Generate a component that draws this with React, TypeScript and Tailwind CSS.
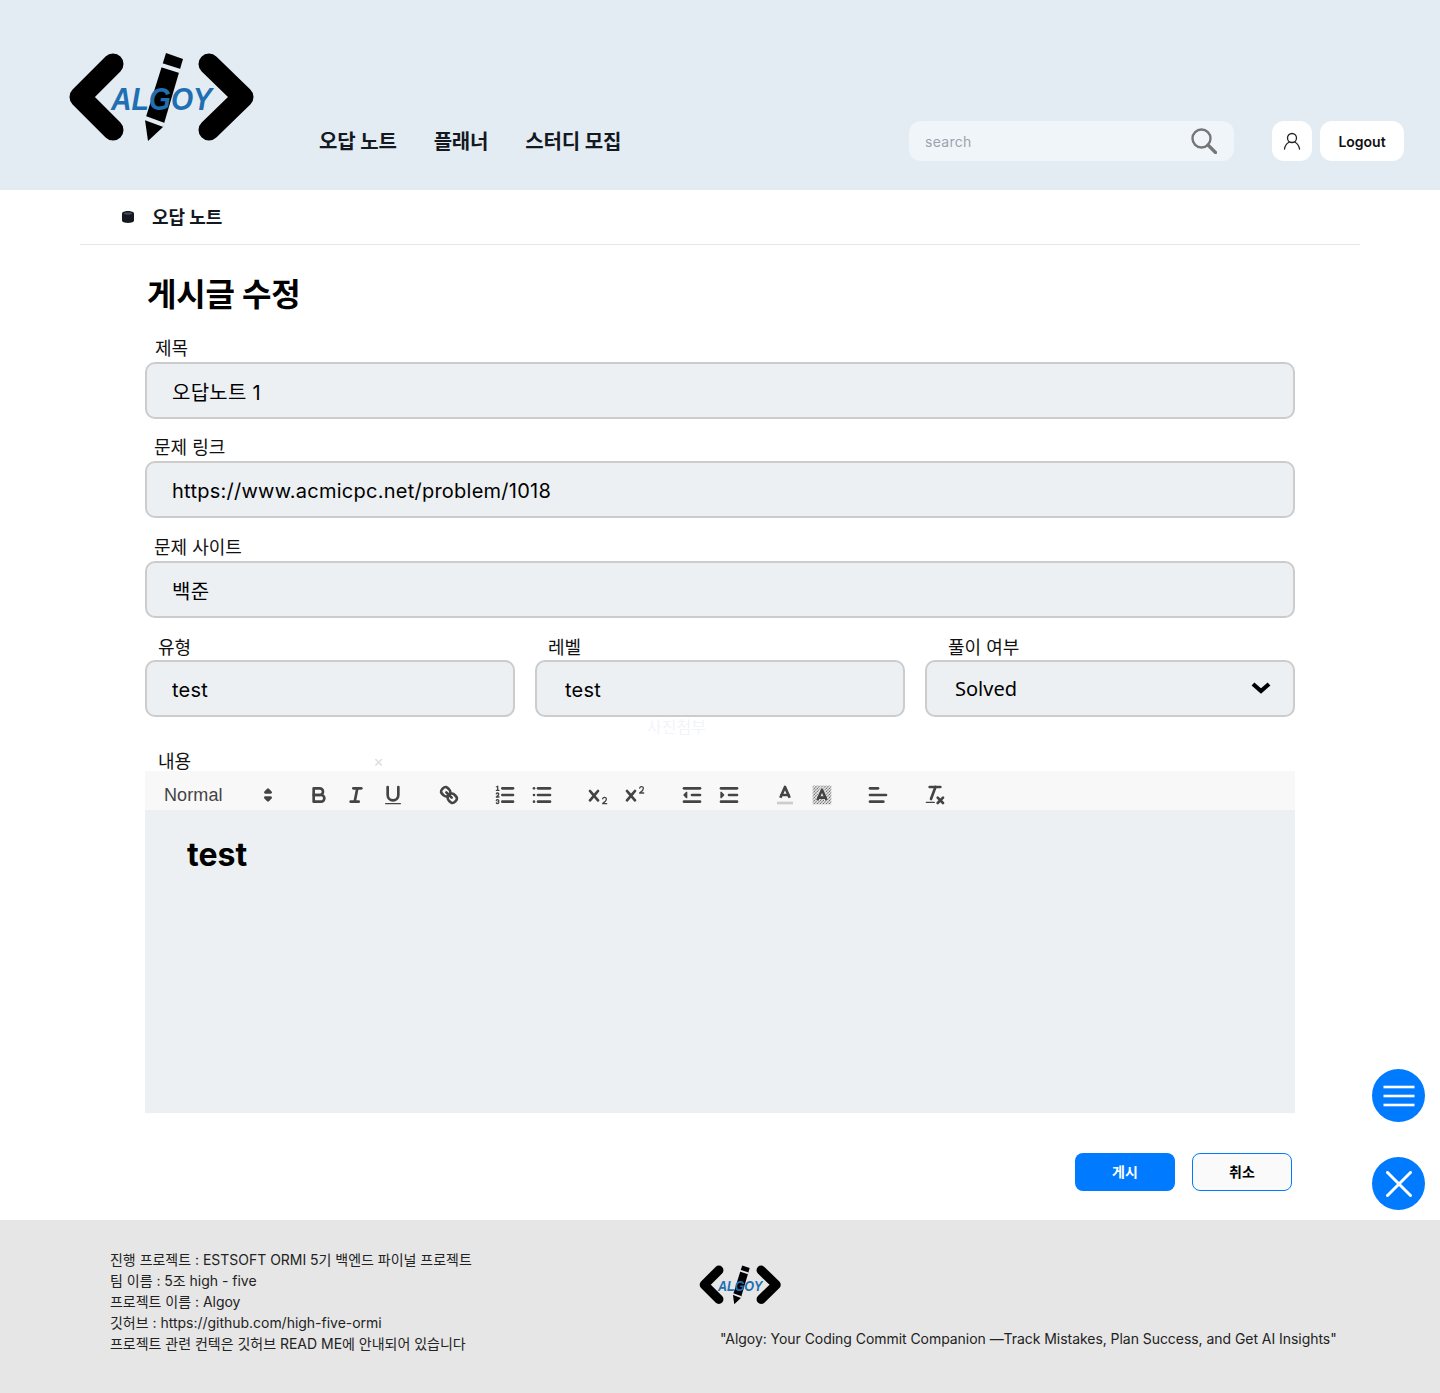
import React from "react";

const FONT = "font-['Inter','Noto_Sans_CJK_KR',sans-serif]";

function Logo({ className }: { className: string }) {
  return (
    <svg viewBox="68 52 186 91" className={className}>
      <g fill="none" stroke="#000" strokeWidth="21" strokeLinecap="round" strokeLinejoin="round">
        <polyline points="113,64 80,97 113,130" />
        <polyline points="209,64 243,97 209,130" />
      </g>
      <polygon points="166,53 183,59 163,127 148,141 145,120" fill="#000" />
      <g stroke="#e3ecf4" strokeWidth="4">
        <line x1="161" y1="65" x2="180" y2="71" />
        <line x1="145" y1="118" x2="164" y2="125" />
      </g>
      <text
        x="111"
        y="110"
        textLength="101"
        lengthAdjust="spacingAndGlyphs"
        fill="#1f6fb2"
        fontSize="32"
        fontWeight="700"
        fontStyle="italic"
        fontFamily="'Liberation Sans Narrow', 'Liberation Sans', sans-serif"
      >
        ALGOY
      </text>
    </svg>
  );
}

function Q({ children, className = "" }: { children: React.ReactNode; className?: string }) {
  return (
    <span className={`flex h-[30px] w-[37px] items-center justify-center ${className}`}>
      <svg viewBox="0 0 18 18" className="h-6 w-6" fill="none" stroke="#444" strokeWidth="2" strokeLinecap="round" strokeLinejoin="round">
        {children}
      </svg>
    </span>
  );
}

function Field({ label, value, labelClass }: { label: string; value: string; labelClass: string }) {
  return (
    <div className="flex flex-col">
      <label className={`h-[28px] text-[18px] text-[#111] ${labelClass}`}>{label}</label>
      <input
        readOnly
        defaultValue={value}
        className={`h-[57px] w-full rounded-[10px] border-2 border-[#cccccc] bg-[#ecf0f3] pl-[25px] pt-[3px] text-[20px] tracking-[0.25px] text-black outline-none ${FONT}`}
      />
    </div>
  );
}

function Toolbar() {
  return (
    <div className="flex h-[39px] items-center gap-[19px] bg-[#f8f8f8] pl-[19px] pt-[9px]">
      <div className="flex w-[117px] items-center justify-between pr-[1px]">
        <span className="font-['Liberation_Sans',sans-serif] text-[18px] tracking-[0.1px] text-[#444]">Normal</span>
        <svg viewBox="0 0 18 18" className="h-6 w-6" fill="#444" stroke="#444" strokeWidth="2" strokeLinejoin="round">
          <polygon points="7 11 9 13 11 11 7 11" />
          <polygon points="7 7 9 5 11 7 7 7" />
        </svg>
      </div>
      <div className="flex">
        <Q>
          <path d="M5,4H9.5A2.5,2.5,0,0,1,12,6.5v0A2.5,2.5,0,0,1,9.5,9H5A0,0,0,0,1,5,9V4A0,0,0,0,1,5,4Z" />
          <path d="M5,9h5.5A2.5,2.5,0,0,1,13,11.5v0A2.5,2.5,0,0,1,10.5,14H5a0,0,0,0,1,0,0V9A0,0,0,0,1,5,9Z" />
        </Q>
        <Q>
          <line x1="7" x2="13" y1="4" y2="4" />
          <line x1="5" x2="11" y1="14" y2="14" />
          <line x1="8" x2="10" y1="14" y2="4" />
        </Q>
        <Q>
          <path d="M5,3V9a4.012,4.012,0,0,0,4,4H9a4.012,4.012,0,0,0,4-4V3" />
          <rect x="3" y="15" width="12" height="1" rx=".5" fill="#444" stroke="none" />
        </Q>
      </div>
      <Q>
        <line x1="7" x2="11" y1="7" y2="11" />
        <path d="M8.9,4.577a3.476,3.476,0,0,1,.36,4.679A3.476,3.476,0,0,1,4.577,8.9C3.185,7.5,2.035,6.4,4.217,4.217S7.5,3.185,8.9,4.577Z" />
        <path d="M13.423,9.1a3.476,3.476,0,0,0-4.679-.36,3.476,3.476,0,0,0,.36,4.679c1.392,1.392,2.5,2.542,4.679.36S14.815,10.5,13.423,9.1Z" />
      </Q>
      <div className="flex">
        <Q>
          <line x1="7" x2="15" y1="4" y2="4" />
          <line x1="7" x2="15" y1="9" y2="9" />
          <line x1="7" x2="15" y1="14" y2="14" />
          <line x1="2.5" x2="4.5" y1="5.5" y2="5.5" strokeWidth="1" />
          <path fill="#444" stroke="none" d="M3.5,6A0.5,0.5,0,0,1,3,5.5V3.085l-0.276.138A0.5,0.5,0,0,1,2.053,3c-0.124-.247-0.023-0.324.224-0.447l1-.5A0.5,0.5,0,0,1,4,2.5v3A0.5,0.5,0,0,1,3.5,6Z" />
          <path strokeWidth="1" d="M4.5,10.5h-2c0-.234,1.85-1.076,1.85-2.234A0.959,0.959,0,0,0,2.5,8.156" />
          <path strokeWidth="1" d="M2.5,14.846a0.959,0.959,0,0,0,1.85-.109A0.7,0.7,0,0,0,3.75,14a0.688,0.688,0,0,0,.6-0.736,0.959,0.959,0,0,0-1.85-.109" />
        </Q>
        <Q>
          <line x1="6" x2="15" y1="4" y2="4" />
          <line x1="6" x2="15" y1="9" y2="9" />
          <line x1="6" x2="15" y1="14" y2="14" />
          <line x1="3" x2="3" y1="4" y2="4" />
          <line x1="3" x2="3" y1="9" y2="9" />
          <line x1="3" x2="3" y1="14" y2="14" />
        </Q>
      </div>
      <div className="ml-[0.5px] flex">
        <Q>
          <path fill="#444" stroke="none" d="M15.5,15H13.861a3.858,3.858,0,0,0,1.914-2.975,1.8,1.8,0,0,0-1.6-1.751A1.921,1.921,0,0,0,12.021,11.7a0.50013,0.50013,0,1,0,.957.291h0a0.914,0.914,0,0,1,1.053-.725,0.81,0.81,0,0,1,.744.762c0,1.076-1.16971,1.86982-1.93971,2.43082A1.45639,1.45639,0,0,0,12,15.5a0.5,0.5,0,0,0,.5.5h3A0.5,0.5,0,0,0,15.5,15Z" />
          <path fill="#444" stroke="none" d="M9.65,5.241a1,1,0,0,0-1.409.108L6,7.964,3.759,5.349A1,1,0,0,0,2.192,6.59178Q2.21541,6.6213,2.241,6.649L4.684,9.5,2.241,12.35A1,1,0,0,0,3.71,13.70722q0.02557-.02768.049-0.05722L6,11.036,8.241,13.65a1,1,0,1,0,1.567-1.24277Q9.78459,12.3777,9.759,12.35L7.316,9.5,9.759,6.651A1,1,0,0,0,9.65,5.241Z" />
        </Q>
        <Q>
          <path fill="#444" stroke="none" d="M15.5,7H13.861a4.015,4.015,0,0,0,1.914-2.975,1.8,1.8,0,0,0-1.6-1.751A1.922,1.922,0,0,0,12.021,3.7a0.5,0.5,0,1,0,.957.291,0.917,0.917,0,0,1,1.053-.725,0.81,0.81,0,0,1,.744.762c0,1.077-1.164,1.925-1.934,2.486A1.423,1.423,0,0,0,12,7.5a0.5,0.5,0,0,0,.5.5h3A0.5,0.5,0,0,0,15.5,7Z" />
          <path fill="#444" stroke="none" d="M9.651,5.241a1,1,0,0,0-1.41.108L6,7.964,3.759,5.349a1,1,0,1,0-1.519,1.3L4.683,9.5,2.241,12.35a1,1,0,1,0,1.519,1.3L6,11.036,8.241,13.65a1,1,0,0,0,1.519-1.3L7.317,9.5,9.759,6.651A1,1,0,0,0,9.651,5.241Z" />
        </Q>
      </div>
      <div className="ml-[0.5px] flex">
        <Q>
          <line x1="3" x2="15" y1="14" y2="14" />
          <line x1="3" x2="15" y1="4" y2="4" />
          <line x1="9" x2="15" y1="9" y2="9" />
          <polyline fill="#444" strokeWidth="1" points="5 7 5 11 3 9 5 7" />
        </Q>
        <Q>
          <line x1="3" x2="15" y1="14" y2="14" />
          <line x1="3" x2="15" y1="4" y2="4" />
          <line x1="9" x2="15" y1="9" y2="9" />
          <polyline fill="#444" strokeWidth="1" points="3 7 3 11 5 9 3 7" />
        </Q>
      </div>
      <div className="flex">
        <Q>
          <line x1="3" x2="15" y1="15" y2="15" stroke="#ccc" strokeLinecap="butt" />
          <polyline points="5.5 11 9 3 12.5 11" strokeLinecap="butt" />
          <line x1="11.63" x2="6.38" y1="9" y2="9" />
        </Q>
        <Q>
          <defs>
            <pattern id="hatch" width="1.6" height="1.6" patternUnits="userSpaceOnUse" patternTransform="rotate(45)">
              <rect width="0.7" height="1.2" fill="#444" stroke="none" />
            </pattern>
          </defs>
          <rect x="2" y="2" width="14" height="14" fill="url(#hatch)" stroke="none" />
          <polyline points="5.5 13 9 5 12.5 13" stroke="#f8f8f8" strokeWidth="3" strokeLinecap="butt" />
          <polyline points="5.5 13 9 5 12.5 13" strokeLinecap="butt" />
          <line x1="11.63" x2="6.38" y1="11" y2="11" />
        </Q>
      </div>
      <Q>
        <line x1="3" x2="15" y1="9" y2="9" />
        <line x1="3" x2="13" y1="14" y2="14" />
        <line x1="3" x2="9" y1="4" y2="4" />
      </Q>
      <Q className="ml-[1px]">
        <line x1="5" x2="13" y1="3" y2="3" />
        <line x1="6" x2="9.35" y1="12" y2="3" />
        <line x1="11" x2="15" y1="11" y2="15" />
        <line x1="15" x2="11" y1="11" y2="15" />
        <rect x="2" y="14" width="7" height="1" rx="0.5" fill="#444" stroke="none" />
      </Q>
    </div>
  );
}

export default function App() {
  return (
    <div className={`relative w-[1440px] bg-white text-black ${FONT}`}>
      <header className="flex h-[190px] items-start bg-[#e4ecf3] pl-[68px] pr-[36px]">
        <Logo className="mt-[52px] h-[91px] w-[186px]" />
        <nav className="ml-[65px] mt-[128px] flex gap-[37px] text-[20px] font-semibold leading-[28px] tracking-[-0.2px] text-[#14181f]">
          <a>오답 노트</a>
          <a>플래너</a>
          <a>스터디 모집</a>
        </nav>
        <div className="ml-auto mt-[121px] flex h-[40px] items-center">
          <div className="flex h-[40px] w-[325px] items-center justify-between rounded-[12px] bg-[#f0f5f9] pl-[16px] pr-[17px]">
            <span className="text-[14px] tracking-[0.3px] text-[#9ca3af]">search</span>
            <svg viewBox="0 0 26 26" className="h-[26px] w-[26px]" fill="none" stroke="#767676">
              <circle cx="10.5" cy="10.5" r="9" strokeWidth="2.4" />
              <line x1="17" y1="17" x2="24.5" y2="24.5" strokeWidth="3.2" strokeLinecap="round" />
            </svg>
          </div>
          <div className="ml-[38px] flex h-[40px] w-[40px] items-center justify-center rounded-[12px] bg-white">
            <svg viewBox="0 0 18 18" className="h-[18px] w-[18px]" fill="none" stroke="#222" strokeWidth="1.3" strokeLinecap="round">
              <circle cx="9" cy="6" r="4.5" />
              <path d="M1.5 17c.5-3.5 3-6 4.5-6.8M16.5 17c-.5-3.5-3-6-4.5-6.8" />
            </svg>
          </div>
          <div className="ml-[8px] flex h-[40px] w-[84px] items-center justify-center rounded-[12px] bg-white text-[14px] font-semibold text-[#111]">
            Logout
          </div>
        </div>
      </header>

      <div className="mx-[80px] flex h-[55px] items-center border-b border-[#e5e7eb] pl-[42px]">
        <svg viewBox="0 0 12 12" className="h-[12px] w-[12px]" fill="#14181f">
          <path d="M0 2.4C0 1 2.7 0 6 0s6 1 6 2.4v7.2C12 11 9.3 12 6 12s-6-1-6-2.4z" />
          <ellipse cx="6" cy="2.6" rx="4" ry="1" fill="#fff" opacity=".25" />
        </svg>
        <span className="ml-[18px] text-[18px] font-semibold leading-[27px] tracking-[-0.1px] text-[#14181f]">오답 노트</span>
      </div>

      <main className="w-[1295px] pl-[145px]">
        <h1 className="h-[88.5px] pl-[2px] pt-[27px] text-[32px] font-bold leading-[46px] tracking-[-0.2px]">게시글 수정</h1>
        <div className="flex flex-col gap-[14.5px]">
          <Field label="제목" value="오답노트 1" labelClass="pl-[10px] leading-[30px]" />
          <Field label="문제 링크" value="https://www.acmicpc.net/problem/1018" labelClass="pl-[9px] leading-[29px]" />
          <Field label="문제 사이트" value="백준" labelClass="pl-[9px] leading-[30px]" />
          <div className="grid grid-cols-3 gap-[20px]">
            <Field label="유형" value="test" labelClass="pl-[13px] leading-[32px]" />
            <div className="[&_input]:pl-[28px]">
              <Field label="레벨" value="test" labelClass="pl-[13px] leading-[32px]" />
            </div>
            <div className="flex flex-col">
              <label className="h-[27.5px] pl-[23px] text-[18px] leading-[32px] text-[#111]">풀이 여부</label>
              <div className="flex h-[57px] items-center justify-between rounded-[10px] border-2 border-[#cccccc] bg-[#ecf0f3] pl-[28px] pr-[22px] pt-[2px] font-['Noto_Sans',sans-serif] text-[20px]">
                <span>Solved</span>
                <svg viewBox="0 0 20 12" className="-mt-[3px] h-[12px] w-[20px]" fill="none" stroke="#000" strokeWidth="4.2" strokeLinejoin="miter">
                  <polyline points="2 2 10 9 18 2" />
                </svg>
              </div>
            </div>
          </div>
        </div>

        <div className="h-[19px] pl-[502px] text-[16px] leading-[20px] text-[#f3f3fb]">사진첨부</div>
        <div className="mt-[14px] flex h-[21px] items-center pl-[13px] text-[18px] text-[#111]">
          <span className="leading-[23px] pt-[1px]">내용</span>
          <span className="ml-[182px] text-[16px] leading-none text-[#dddddd]">×</span>
        </div>
        <Toolbar />
        <div className="h-[303px] bg-[#ecf0f3] pl-[42px] pt-[22px] text-[32px] font-bold leading-[46px]">test</div>

        <div className="mt-[40px] flex justify-end gap-[17px] pr-[3px]">
          <button className="h-[38px] w-[100px] rounded-[8px] bg-[#007bff] pb-[2px] text-[14px] font-semibold text-white">게시</button>
          <button className="h-[38px] w-[100px] rounded-[8px] border border-[#007bff] bg-[#fafafa] pb-[2px] text-[14px] font-semibold text-black">취소</button>
        </div>
      </main>

      <footer className="mt-[29px] flex h-[173px] bg-[#e6e6e6] pl-[110px] pt-[29px] text-[14px] leading-[21px] tracking-[-0.02px] text-[#222]">
        <div className="w-[589px]">
          <p>진행 프로젝트 : ESTSOFT ORMI 5기 백엔드 파이널 프로젝트</p>
          <p>팀 이름 : 5조 high - five</p>
          <p>프로젝트 이름 : Algoy</p>
          <p>깃허브 : https://github.com/high-five-ormi</p>
          <p>프로젝트 관련 컨텍은 깃허브 READ ME에 안내되어 있습니다</p>
        </div>
        <div className="-mt-[14px]">
          <Logo className="mt-[29px] h-[42px] w-[82px]" />
          <p className="ml-[21px] mt-[22px] whitespace-nowrap tracking-[-0.05px]">"Algoy: Your Coding Commit Companion —Track Mistakes, Plan Success, and Get AI Insights"</p>
        </div>
      </footer>

      <button className="absolute left-[1372px] top-[1069px] flex h-[53px] w-[53px] items-center justify-center rounded-full bg-[#007bff]">
        <svg viewBox="0 0 32 22" className="h-[22px] w-[32px]" stroke="#fff" strokeWidth="2.6">
          <line x1="0.5" y1="2" x2="31.5" y2="2" />
          <line x1="0.5" y1="11" x2="31.5" y2="11" />
          <line x1="0.5" y1="20" x2="31.5" y2="20" />
        </svg>
      </button>
      <button className="absolute left-[1372px] top-[1157px] flex h-[53px] w-[53px] items-center justify-center rounded-full bg-[#007bff]">
        <svg viewBox="0 0 26 26" className="h-[26px] w-[26px]" stroke="#fff" strokeWidth="3" strokeLinecap="round">
          <line x1="1.5" y1="1.5" x2="24.5" y2="24.5" />
          <line x1="24.5" y1="1.5" x2="1.5" y2="24.5" />
        </svg>
      </button>
    </div>
  );
}
